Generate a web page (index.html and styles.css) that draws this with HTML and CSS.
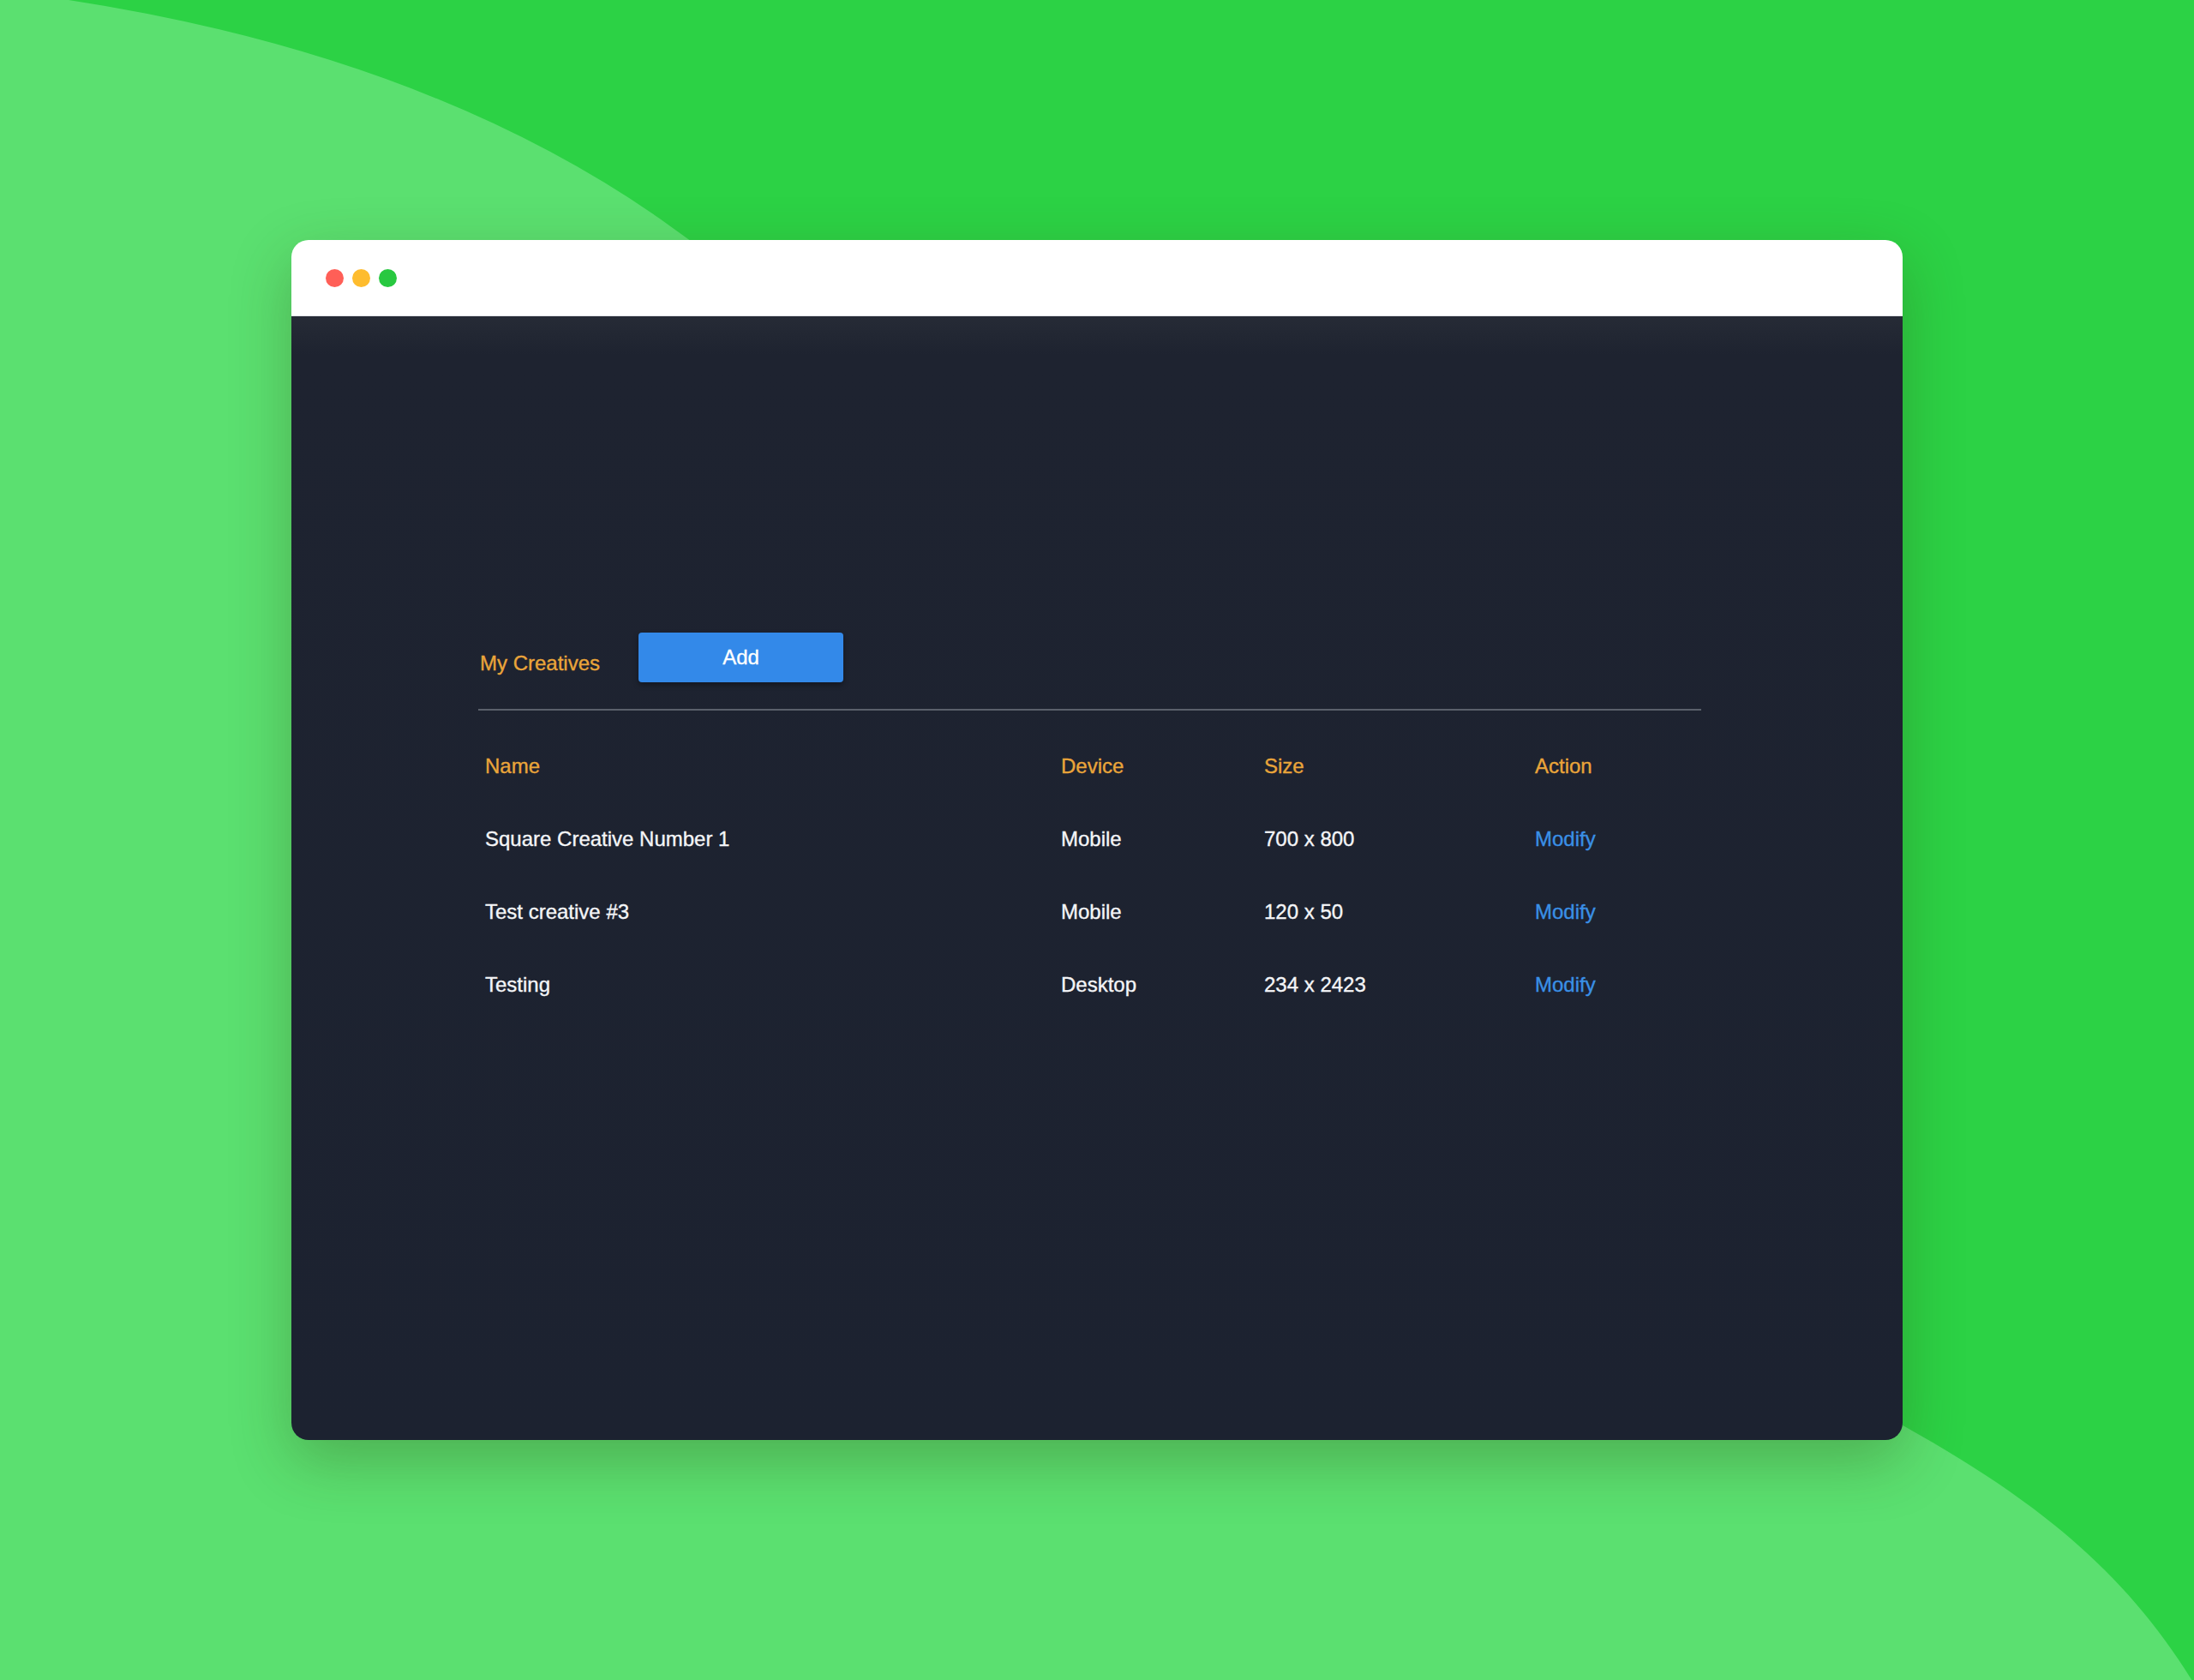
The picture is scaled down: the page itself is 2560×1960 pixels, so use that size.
FILE: index.html
```html
<!DOCTYPE html>
<html lang="en">
<head>
<meta charset="utf-8">
<title>My Creatives</title>
<link rel="stylesheet" href="styles.css">
</head>
<body>
<svg class="backdrop" width="2560" height="1960" viewBox="0 0 2560 1960" aria-hidden="true">
  <rect width="2560" height="1960" fill="#2cd245"/>
  <path d="M0 0 L80 0 Q600 80 900 360 L2150 1625 C2350 1730 2480 1820 2575 1990 L0 1990 Z" fill="#5be070"/>
</svg>
<main class="stage">
  <section class="window">
    <header class="titlebar">
      <span class="dot dot-red"></span>
      <span class="dot dot-yellow"></span>
      <span class="dot dot-green"></span>
    </header>
    <div class="panel">
      <div class="content">
        <div class="toolbar">
          <h2 class="label">My Creatives</h2>
          <button class="btn-add" type="button">Add</button>
        </div>
        <hr class="rule">
        <table class="creatives">
          <colgroup>
            <col class="c-name"><col class="c-device"><col class="c-size"><col class="c-action">
          </colgroup>
          <thead>
            <tr><th>Name</th><th>Device</th><th>Size</th><th>Action</th></tr>
          </thead>
          <tbody>
            <tr><td>Square Creative Number 1</td><td>Mobile</td><td>700 x 800</td><td><a class="link" href="#">Modify</a></td></tr>
            <tr><td>Test creative #3</td><td>Mobile</td><td>120 x 50</td><td><a class="link" href="#">Modify</a></td></tr>
            <tr><td>Testing</td><td>Desktop</td><td>234 x 2423</td><td><a class="link" href="#">Modify</a></td></tr>
          </tbody>
        </table>
      </div>
    </div>
  </section>
</main>
</body>
</html>
```

FILE: styles.css
```css
html, body {
  margin: 0;
  padding: 0;
}
body {
  width: 2560px;
  height: 1960px;
  overflow: hidden;
  position: relative;
  background: #2cd245;
  font-family: "Liberation Sans", Arial, sans-serif;
}
.backdrop {
  position: absolute;
  left: 0;
  top: 0;
  z-index: 0;
  display: block;
}
.stage {
  position: relative;
  z-index: 1;
  display: flex;
  padding: 280px 0 0 340px;
}
.window {
  width: 1880px;
  height: 1400px;
  border-radius: 20px;
  overflow: hidden;
  display: flex;
  flex-direction: column;
  box-shadow: 0 24px 70px rgba(50, 70, 20, 0.32);
}
.titlebar {
  height: 88px;
  flex: none;
  background: #ffffff;
  border-bottom: 1px solid #e2e4e8;
  display: flex;
  align-items: center;
  gap: 10px;
  padding-left: 40px;
}
.dot {
  width: 21px;
  height: 21px;
  border-radius: 50%;
  display: block;
}
.dot-red { background: #ff5f57; }
.dot-yellow { background: #febc2e; }
.dot-green { background: #28c840; }
.panel {
  flex: 1;
  background: linear-gradient(#262b36 0, #1e2330 45px, #1c2230 100%);
}
.content {
  width: 1427px;
  margin-left: 218px;
  padding-top: 369px;
}
.toolbar {
  display: flex;
  align-items: flex-end;
  gap: 45px;
  padding-left: 2px;
}
.label {
  margin: 0 0 8px 0;
  font-size: 24px;
  line-height: 28px;
  font-weight: normal;
  color: #eaa53a;
  -webkit-text-stroke: 0.35px #eaa53a;
}
.btn-add {
  width: 239px;
  height: 58px;
  border: 0;
  border-radius: 4px;
  background: #3389e9;
  color: #ffffff;
  font-family: "Liberation Sans", Arial, sans-serif;
  font-size: 24px;
  line-height: 28px;
  padding: 0;
  -webkit-text-stroke: 0.35px #ffffff;
  box-shadow: 0 3px 6px rgba(0, 0, 0, 0.35);
}
.rule {
  margin: 31px 0 0 0;
  border: 0;
  height: 2px;
  background: #5a606b;
}
.creatives {
  width: 100%;
  margin-top: 22px;
  border-collapse: collapse;
  table-layout: fixed;
  font-size: 24px;
}
.c-name { width: 672px; }
.c-device { width: 237px; }
.c-size { width: 316px; }
.creatives th,
.creatives td {
  height: 85px;
  padding: 0 8px;
  text-align: left;
  vertical-align: middle;
  line-height: 28px;
  white-space: nowrap;
}
.creatives th {
  font-weight: normal;
  color: #eaa53a;
  -webkit-text-stroke: 0.35px #eaa53a;
}
.creatives td {
  color: #f4f5f7;
  -webkit-text-stroke: 0.35px #f4f5f7;
}
.link {
  color: #3a90e6;
  text-decoration: none;
  -webkit-text-stroke: 0.35px #3a90e6;
}
```
